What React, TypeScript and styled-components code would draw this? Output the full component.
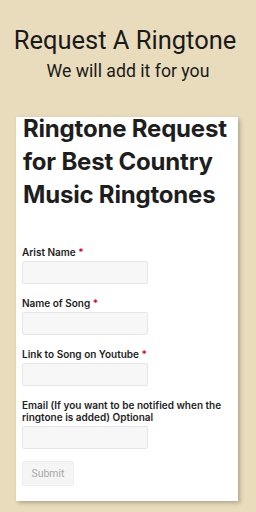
import React from "react";
import styled, { createGlobalStyle } from "styled-components";

const GlobalStyle = createGlobalStyle`
  html, body {
    margin: 0;
    padding: 0;
    background: #e9dcbc;
  }
  body {
    width: 256px;
    height: 512px;
    overflow: hidden;
  }
`;

const Page = styled.div`
  width: 256px;
  height: 512px;
  background: #e9dcbc;
  display: flex;
  flex-direction: column;
  font-family: Roboto, "Liberation Sans", sans-serif;
`;

const Header = styled.header`
  display: flex;
  flex-direction: column;
  align-items: center;
  padding-top: 25px;
  width: 100%;
`;

const Title = styled.h1`
  margin: 0 0 0 -6px;
  font-size: 25.5px;
  font-weight: 400;
  line-height: 30px;
  color: #1a1a1a;
`;

const Subtitle = styled.p`
  margin: 5px 0 0;
  font-size: 17.7px;
  line-height: 22px;
  color: #1a1a1a;
`;

const Card = styled.div`
  margin: 35px 0 0 16px;
  width: 222px;
  height: 384px;
  box-sizing: border-box;
  background: #fff;
  box-shadow: 2px 2px 4px rgba(0, 0, 0, 0.25);
  padding: 0 6px;
  font-family: Inter, "Liberation Sans", sans-serif;
`;

const FormTitle = styled.h2`
  margin: -5px 0 0 1px;
  font-size: 24px;
  font-weight: 700;
  line-height: 33px;
  letter-spacing: -0.2px;
  color: #1e1e1e;
`;

const Form = styled.form`
  display: flex;
  flex-direction: column;
  margin-top: 35px;
`;

const Field = styled.div`
  display: flex;
  flex-direction: column;
  margin-bottom: 13px;
`;

const Label = styled.label`
  font-size: 10px;
  font-weight: 600;
  line-height: 12px;
  color: #1e1e1e;
  margin-bottom: 3px;
`;

const Required = styled.span`
  color: #d0021b;
`;

const Input = styled.input`
  width: 126px;
  height: 23px;
  box-sizing: border-box;
  background: #f7f7f7;
  border: 1px solid #e6e6e6;
  border-radius: 2px;
  padding: 0 6px;
`;

const SubmitButton = styled.button`
  align-self: flex-start;
  margin-top: -1px;
  width: 52px;
  height: 25px;
  background: #f5f5f5;
  border: 1px solid #efefef;
  border-radius: 2px;
  color: #a8a8a8;
  font-family: Roboto, "Liberation Sans", sans-serif;
  font-size: 10.5px;
  padding: 0;
`;

export default function App() {
  return (
    <>
      <GlobalStyle />
      <Page>
        <Header>
          <Title>Request A Ringtone</Title>
          <Subtitle>We will add it for you</Subtitle>
        </Header>
        <Card>
          <FormTitle>
            Ringtone Request for Best Country Music Ringtones
          </FormTitle>
          <Form onSubmit={(e) => e.preventDefault()}>
            <Field>
              <Label>
                Arist Name <Required>*</Required>
              </Label>
              <Input />
            </Field>
            <Field>
              <Label>
                Name of Song <Required>*</Required>
              </Label>
              <Input />
            </Field>
            <Field>
              <Label>
                Link to Song on Youtube <Required>*</Required>
              </Label>
              <Input />
            </Field>
            <Field>
              <Label>
                Email (If you want to be notified when the ringtone is added)
                Optional
              </Label>
              <Input />
            </Field>
            <SubmitButton type="submit">Submit</SubmitButton>
          </Form>
        </Card>
      </Page>
    </>
  );
}
